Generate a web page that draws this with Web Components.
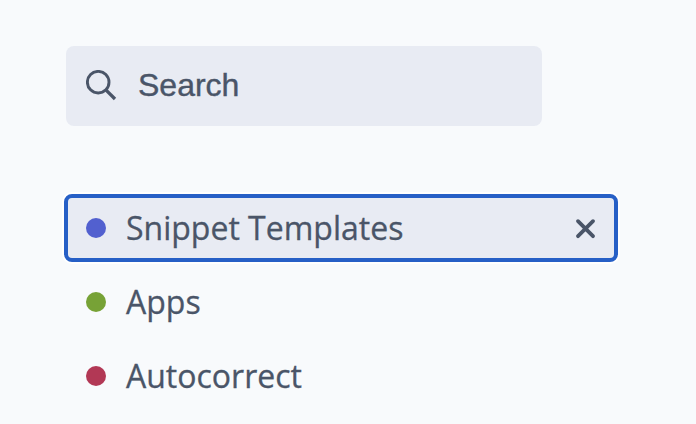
<!DOCTYPE html>
<html lang="en">
<head>
<meta charset="utf-8">
<title>Snippets</title>
<style>
    body {
        margin: 0;
        height: 424px;
        overflow: hidden;
        background-color: #f8fafc;
        color: #4a5568;
        font-family: "Open Sans", "Noto Sans", sans-serif;
        font-size: 32px;
    }
</style>
</head>
<body>
<side-panel>
    <search-box slot="search">Search</search-box>
    <folder-item color="#5260cf" active>Snippet Templates</folder-item>
    <folder-item color="#77a236">Apps</folder-item>
    <folder-item color="#b23855">Autocorrect</folder-item>
</side-panel>

<script>
// Panel with the search field above the folder list
class SidePanel extends HTMLElement {
    constructor() {
        super();
        this.attachShadow({ mode: 'open' });
        this.shadowRoot.innerHTML = `
            <style>
                :host {
                    display: flex;
                    flex-direction: column;
                    gap: 68px;
                    padding: 46px 0 0 64px;
                }

                .list {
                    display: flex;
                    flex-direction: column;
                    gap: 6px;
                    width: 554px;
                }
            </style>
            <slot name="search"></slot>
            <div class="list"><slot></slot></div>
        `;
    }
}

// Search field
class SearchBox extends HTMLElement {
    constructor() {
        super();
        this.attachShadow({ mode: 'open' });
        this.shadowRoot.innerHTML = `
            <style>
                :host {
                    display: flex;
                    align-items: center;
                    gap: 20px;
                    box-sizing: border-box;
                    width: 476px;
                    height: 80px;
                    margin-left: 2px;
                    padding: 0 20px;
                    border-radius: 8px;
                    background-color: #e8ebf3;
                    font-family: "Liberation Sans", Arial, sans-serif;
                    -webkit-text-stroke: 0.4px currentColor;
                }

                svg {
                    width: 32px;
                    height: 32px;
                }

                span {
                    padding-bottom: 2px;
                }
            </style>
            <svg viewBox="0 0 32 32" fill="none" stroke="currentColor" stroke-width="2.9">
                <circle cx="12.2" cy="12.2" r="10.8"/>
                <path stroke-width="3.3" d="M19.6 19.6 L29 29"/>
            </svg>
            <span><slot></slot></span>
        `;
    }
}

// Folder row; the active one has a focus ring and a close button
class FolderItem extends HTMLElement {
    constructor() {
        super();
        this.attachShadow({ mode: 'open' });
    }

    connectedCallback() {
        this.render();
    }

    render() {
        const color = this.getAttribute('color');
        const active = this.hasAttribute('active');

        this.shadowRoot.innerHTML = `
            <style>
                :host {
                    display: flex;
                    align-items: center;
                    box-sizing: border-box;
                    height: 68px;
                    padding: 0 16px 0 18px;
                    border: 4px solid transparent;
                    border-radius: 8px;
                }

                :host([active]) {
                    background-color: #e8ebf3;
                    border-color: #265fc6;
                    box-shadow: 0 0 0 2px #fff;
                }

                .dot {
                    width: 20px;
                    height: 20px;
                    margin-right: 20px;
                    border-radius: 50%;
                    background-color: ${color};
                }

                .label {
                    flex: 1;
                    padding-bottom: 2px;
                    white-space: nowrap;
                    -webkit-text-stroke: 0.3px currentColor;
                }

                svg {
                    width: 24px;
                    height: 24px;
                }
            </style>
            <span class="dot"></span>
            <span class="label"><slot></slot></span>
            ${active ? `
            <svg viewBox="0 0 24 24" fill="none" stroke="currentColor" stroke-width="3.8" stroke-linecap="round">
                <path d="M4 5.2 L19 20.2 M19 5.2 L4 20.2"/>
            </svg>` : ''}
        `;
    }
}

customElements.define('side-panel', SidePanel);
customElements.define('search-box', SearchBox);
customElements.define('folder-item', FolderItem);
</script>
</body>
</html>
